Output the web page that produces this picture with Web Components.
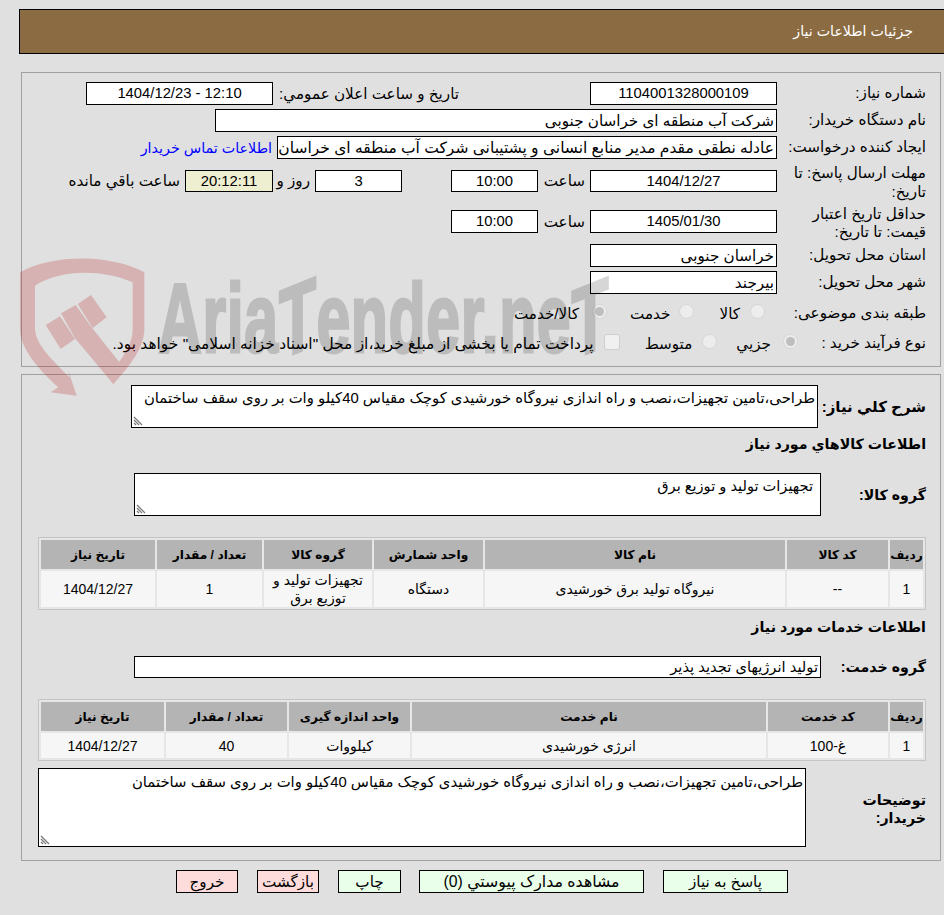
<!DOCTYPE html>
<html lang="fa"><head><meta charset="utf-8"><title>جزئیات اطلاعات نیاز</title>
<style>
html,body{margin:0;padding:0;background:#e0e0e0}
body{font:15.2px/18px "Liberation Sans","DejaVu Sans",sans-serif;color:#000;height:915px;overflow:hidden}
</style></head><body>
<need-page></need-page>
<script>
const css=`:host{display:block;box-sizing:border-box} *{box-sizing:border-box}`;
function def(name,html){
  customElements.define(name,class extends HTMLElement{
    constructor(){super();const r=this.attachShadow({mode:'open'});const t=document.createElement('template');t.innerHTML=`<style>${css}</style>`+html;r.append(t.content.cloneNode(true));}
  });
}
def('page-header',`<style>:host{margin:9px 0 0 19px;height:45px;background:#8b6b41;border:1px solid #000;border-right:0;color:#fff;display:flex;align-items:center;padding:0 31px 1px 0;direction:rtl;font-size:14.2px}</style><slot></slot>`);
def('f-box',`<style>:host{display:block;height:23px;background:#fff;border:1px solid #000;line-height:21px;white-space:nowrap;overflow:hidden;padding:0 2px}:host([c]){text-align:center;font-size:14.8px}:host([y]){background:#eeeed0}</style><slot></slot>`);
def('f-radio',`<style>:host{display:block;width:15px;height:15px;border-radius:50%;background:#ededed;border:1.5px solid #d6d6d6;position:relative;flex:none;transform:translateY(-2px)}:host([on])::after{content:"";position:absolute;inset:2px;border-radius:50%;background:#bebebe}:host([sq]){border-radius:3px;width:16px;height:16px;background:#f0f0f0;border-color:#cfcfcf}</style>`);
def('f-area',`<style>:host{display:block;background:#fff;border:1px solid #000;padding:3px 2px 0 0;position:relative;font-size:14.85px;line-height:18px;white-space:nowrap;overflow:hidden;direction:rtl;flex:none}svg{position:absolute;left:1px;bottom:1px}</style><slot></slot><svg width="10" height="10" viewBox="0 0 10 10"><path d="M1 1l8 8M1 4l5 5M1 7l2 2" stroke="#777" stroke-width="1.2" fill="none"/></svg>`);
def('f-btn',`<style>:host{display:flex;align-items:center;justify-content:center;height:23px;border:1px solid #000;background:#e9ffe9;padding-top:1px;flex:none}:host([r]){background:#ffdcdc}</style><slot></slot>`);
def('f-table',`<style>:host{display:block;border:1px solid #c4c4c4;background:#e6e6e6;padding:2px;flex:none}</style><slot></slot>`);
def('f-row',`<style>:host{display:grid;gap:2px;grid-template-columns:var(--cols);direction:rtl}</style><slot></slot>`);
def('f-cell',`<style>:host{display:flex;align-items:center;justify-content:center;text-align:center;background:#f6f6f6;font-size:14px;line-height:18px;padding:0 6px;min-height:var(--h,36px)}:host([h]){background:#b4b4b4;font-weight:bold;min-height:29px;font-size:12.2px;padding:0}</style><slot></slot>`);
def('water-mark',`<style>:host{position:absolute;left:10px;top:240px;width:640px;height:170px;pointer-events:none;z-index:3}
svg{position:absolute;left:0;top:0}
.t{position:absolute;left:148px;top:9px;font:bold 98px/120px "Liberation Sans",sans-serif;color:#000;opacity:.155;transform-origin:0 50%;transform:scaleX(.62);white-space:nowrap;direction:ltr;-webkit-text-stroke:3px #000;letter-spacing:1px}
.t span{display:inline-block;transform:skewY(-14deg)}</style>
<svg width="300" height="160" viewBox="0 0 900 480"><g fill="#b00000" opacity=".2"><path d="M30 70C130 15 300 15 403 70L403 245C400 295 365 345 310 405L290 380C340 330 368 285 368 240L368 100C280 60 150 60 75 110L75 240C78 290 130 335 178 385L175 365L200 440L122 430L145 415C90 365 30 300 30 240Z"/><path d="M107 228L150 202L195 270L152 300Z"/><path d="M153 193L197 168L247 238L340 355L310 405L195 268Z"/><path d="M203 165L243 138L290 205L248 237Z"/></g></svg><div class="t">Aria<span>T</span>ender.ne<span>T</span></div>`);

def('need-page',`<style>
:host{position:relative;direction:rtl;height:915px}
.g1{height:18px}.g2{height:7px}
</style>
<page-header>جزئیات اطلاعات نیاز</page-header>
<div class="g1"></div>
<form-top></form-top>
<div class="g2"></div>
<form-bottom></form-bottom>
<footer-btns></footer-btns>
<water-mark></water-mark>`);

def('form-top',`<style>
:host{margin:0 3px 0 21px;border:1px solid #a0a0a0;height:295px;direction:rtl;padding:9px 14px 0 0;display:flex;flex-direction:column}
.r{display:flex;align-items:center;flex:none;height:23px;margin-bottom:4px}
.lb{width:149px;flex:none;line-height:18.5px}
f-box{flex:none}
.w187{width:187px}.w87{width:87px}
.sp{flex:none}
a{color:#00f;text-decoration:none;white-space:nowrap;font-size:14.3px;margin-right:5px}
.tx{flex:none;white-space:nowrap}
</style>
<div class="r"><div class="lb">شماره نیاز:</div><f-box c class="w187">1104001328000109</f-box><div class="sp" style="width:131px"></div><div class="tx" style="width:186px">تاریخ و ساعت اعلان عمومي:</div><f-box c class="w187" dir="ltr">1404/12/23 - 12:10</f-box></div>
<div class="r"><div class="lb">نام دستگاه خریدار:</div><f-box style="width:562px">شرکت آب منطقه ای خراسان جنوبی</f-box></div>
<div class="r" style="margin-bottom:11px"><div class="lb">ایجاد کننده درخواست:</div><f-box style="width:500px;font-size:15.5px">عادله نطقی مقدم مدیر منابع انسانی و پشتیبانی شرکت آب منطقه ای خراسان</f-box><a>اطلاعات تماس خریدار</a></div>
<div class="r" style="height:22px;margin-bottom:18px"><div class="lb" style="margin-top:3px">مهلت ارسال پاسخ: تا تاریخ:</div><f-box c class="w187" style="height:22px">1404/12/27</f-box><div class="tx" style="width:52px;padding-right:5px">ساعت</div><f-box c class="w87" style="height:22px">10:00</f-box><div class="sp" style="width:49px"></div><f-box c class="w87" style="height:22px">3</f-box><div class="tx" style="width:42px;padding-right:5px">روز و</div><f-box c y style="width:88px;height:22px">20:12:11</f-box><div class="tx" style="padding-right:5px">ساعت باقي مانده</div></div>
<div class="r" style="margin-bottom:11px"><div class="lb" style="margin-top:3px">حداقل تاریخ اعتبار قیمت: تا تاریخ:</div><f-box c class="w187">1405/01/30</f-box><div class="tx" style="width:52px;padding-right:5px">ساعت</div><f-box c class="w87">10:00</f-box></div>
<div class="r"><div class="lb">استان محل تحویل:</div><f-box class="w187">خراسان جنوبی</f-box></div>
<div class="r" style="margin-bottom:8px"><div class="lb">شهر محل تحویل:</div><f-box class="w187">بیرجند</f-box></div>
<div class="r" style="margin-bottom:7px"><div class="lb">طبقه بندی موضوعی:</div><f-radio style="margin-right:12px"></f-radio><div class="tx" style="margin-right:10px">کالا</div><f-radio style="margin-right:25px"></f-radio><div class="tx" style="margin-right:9px">خدمت</div><f-radio on style="margin-right:23px"></f-radio><div class="tx" style="margin-right:13px">کالا/خدمت</div></div>
<div class="r"><div class="lb" style="width:128px">نوع فرآیند خرید :</div><f-radio on></f-radio><div class="tx" style="margin-right:12px">جزيي</div><f-radio style="margin-right:19px"></f-radio><div class="tx" style="margin-right:10px">متوسط</div><f-radio sq style="margin-right:25px"></f-radio><div class="tx" style="margin-right:10px;font-size:15.45px">پرداخت تمام یا بخشی از مبلغ خرید،از محل "اسناد خزانه اسلامی" خواهد بود.</div></div>`);

const note='طراحی،تامین تجهیزات،نصب و راه اندازی نیروگاه خورشیدی کوچک مقیاس 40کیلو وات بر روی سقف ساختمان';
def('form-bottom',`<style>
:host{margin:0 3px 0 21px;border:1px solid #a0a0a0;height:487px;direction:rtl;padding:10px 14px 0 0;display:flex;flex-direction:column}
.b{font-weight:bold;font-size:14.2px;white-space:nowrap;flex:none}
.r{display:flex;align-items:center;flex:none}
.cap{height:18px;line-height:18px}
.t1{--cols:33px 101px 300px 109px 108px 105px 114px;--h:36px;width:888px;margin-top:21px}
.t2{--cols:33px 120px 354px 121px 121px 123px;--h:25px;width:888px;margin-top:21px}
</style>
<div class="r" style="height:43px"><div class="b" style="width:108px;font-size:15px">شرح کلي نیاز:</div><f-area style="width:687px;height:43px">${note}</f-area></div>
<div class="b cap" style="margin-top:7px">اطلاعات کالاهاي مورد نیاز</div>
<div class="r" style="height:43px;margin-top:20px"><div class="b" style="width:105px">گروه کالا:</div><f-area style="width:687px;height:43px;padding-right:7px;font-size:14.6px">تجهیزات تولید و توزیع برق</f-area></div>
<f-table class="t1">
<f-row style="margin-bottom:2px"><f-cell h>ردیف</f-cell><f-cell h>کد کالا</f-cell><f-cell h>نام کالا</f-cell><f-cell h>واحد شمارش</f-cell><f-cell h>گروه کالا</f-cell><f-cell h>تعداد / مقدار</f-cell><f-cell h>تاریخ نیاز</f-cell></f-row>
<f-row><f-cell>1</f-cell><f-cell>--</f-cell><f-cell>نیروگاه تولید برق خورشیدی</f-cell><f-cell>دستگاه</f-cell><f-cell>تجهیزات تولید و توزیع برق</f-cell><f-cell>1</f-cell><f-cell>1404/12/27</f-cell></f-row>
</f-table>
<div class="b cap" style="margin-top:8px">اطلاعات خدمات مورد نیاز</div>
<div class="r" style="height:22px;margin-top:20px"><div class="b" style="width:105px">گروه خدمت:</div><f-box style="width:687px;height:22px;flex:none;font-size:14.7px">تولید انرژیهای تجدید پذیر</f-box></div>
<f-table class="t2">
<f-row style="margin-bottom:2px"><f-cell h>ردیف</f-cell><f-cell h>کد خدمت</f-cell><f-cell h>نام خدمت</f-cell><f-cell h>واحد اندازه گیری</f-cell><f-cell h>تعداد / مقدار</f-cell><f-cell h>تاریخ نیاز</f-cell></f-row>
<f-row><f-cell>1</f-cell><f-cell>غ-100</f-cell><f-cell>انرژی خورشیدی</f-cell><f-cell>کیلووات</f-cell><f-cell>40</f-cell><f-cell>1404/12/27</f-cell></f-row>
</f-table>
<div class="r" style="margin-top:7px"><div class="b" style="width:120px;white-space:normal;line-height:18px;padding:3px 0 0 40px">توضیحات خریدار:</div><f-area style="width:768px;height:79px;padding-top:4px">${note}</f-area></div>`);

def('footer-btns',`<style>:host{direction:rtl;display:flex;margin-top:9px;padding-right:156px}
</style><f-btn style="width:125px">پاسخ به نیاز</f-btn><f-btn style="width:225px;margin-right:19px;font-size:15.8px">مشاهده مدارک پیوستي (0)</f-btn><f-btn style="width:63px;margin-right:18px">چاپ</f-btn><f-btn r style="width:62px;margin-right:19px">بازگشت</f-btn><f-btn r style="width:62px;margin-right:19px">خروج</f-btn>`);
</script>
</body></html>
